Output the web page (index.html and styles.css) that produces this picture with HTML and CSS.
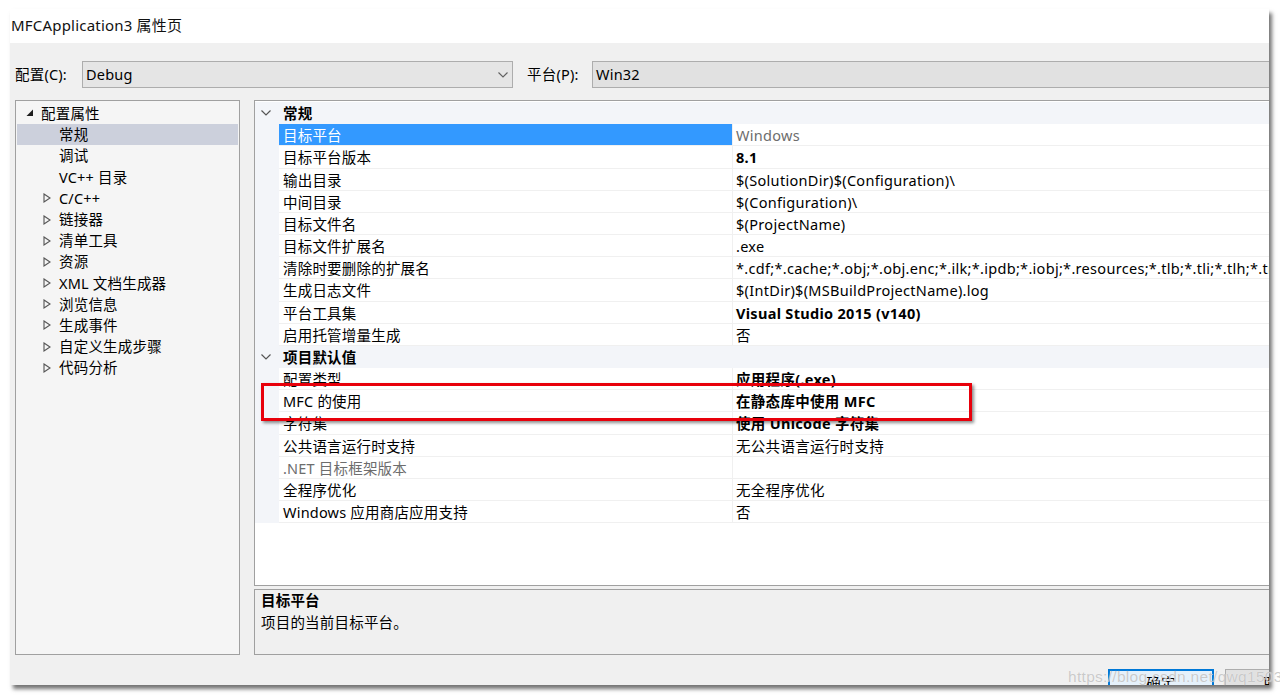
FILE: index.html
```html
<!DOCTYPE html>
<html lang="zh">
<head>
<meta charset="utf-8">
<title>MFCApplication3 属性页</title>
<link rel="stylesheet" href="styles.css">
</head>
<body>
<div class="window">
  <div class="titlebar">MFCApplication3 属性页</div>
  <div class="configbar">
    <span class="label">配置(C):</span>
    <div class="combo combo-config">
      <span>Debug</span>
      <svg class="arrow" width="10" height="6" viewBox="0 0 10 6"><path d="M0.5 0.5 L5 5 L9.5 0.5" fill="none" stroke="#606060" stroke-width="1.1"/></svg>
    </div>
    <span class="label label-plat">平台(P):</span>
    <div class="combo combo-plat"><span>Win32</span></div>
  </div>
  <div class="main">
    <div class="tree">
      <div class="titem root"><svg class="exp" width="8" height="8" viewBox="0 0 8 8"><polygon points="7,0.5 7,7 0.5,7" fill="#1e1e1e"/></svg><span>配置属性</span></div>
      <div class="titem leaf sel"><span>常规</span></div>
      <div class="titem leaf"><span>调试</span></div>
      <div class="titem leaf"><span>VC++ 目录</span></div>
      <div class="titem child"><svg class="col" width="8" height="10" viewBox="0 0 8 10"><polygon points="1,1 7,5 1,9" fill="none" stroke="#555" stroke-width="1.1"/></svg><span>C/C++</span></div>
      <div class="titem child"><svg class="col" width="8" height="10" viewBox="0 0 8 10"><polygon points="1,1 7,5 1,9" fill="none" stroke="#555" stroke-width="1.1"/></svg><span>链接器</span></div>
      <div class="titem child"><svg class="col" width="8" height="10" viewBox="0 0 8 10"><polygon points="1,1 7,5 1,9" fill="none" stroke="#555" stroke-width="1.1"/></svg><span>清单工具</span></div>
      <div class="titem child"><svg class="col" width="8" height="10" viewBox="0 0 8 10"><polygon points="1,1 7,5 1,9" fill="none" stroke="#555" stroke-width="1.1"/></svg><span>资源</span></div>
      <div class="titem child"><svg class="col" width="8" height="10" viewBox="0 0 8 10"><polygon points="1,1 7,5 1,9" fill="none" stroke="#555" stroke-width="1.1"/></svg><span>XML 文档生成器</span></div>
      <div class="titem child"><svg class="col" width="8" height="10" viewBox="0 0 8 10"><polygon points="1,1 7,5 1,9" fill="none" stroke="#555" stroke-width="1.1"/></svg><span>浏览信息</span></div>
      <div class="titem child"><svg class="col" width="8" height="10" viewBox="0 0 8 10"><polygon points="1,1 7,5 1,9" fill="none" stroke="#555" stroke-width="1.1"/></svg><span>生成事件</span></div>
      <div class="titem child"><svg class="col" width="8" height="10" viewBox="0 0 8 10"><polygon points="1,1 7,5 1,9" fill="none" stroke="#555" stroke-width="1.1"/></svg><span>自定义生成步骤</span></div>
      <div class="titem child"><svg class="col" width="8" height="10" viewBox="0 0 8 10"><polygon points="1,1 7,5 1,9" fill="none" stroke="#555" stroke-width="1.1"/></svg><span>代码分析</span></div>
    </div>
    <div class="right">
      <div class="grid">
        <div class="cat"><div class="gut"><svg width="10" height="6" viewBox="0 0 10 6"><path d="M0.5 0.5 L5 5 L9.5 0.5" fill="none" stroke="#555" stroke-width="1.2"/></svg></div><div class="catname">常规</div></div>
        <div class="row"><div class="gut"></div><div class="name selname">目标平台</div><div class="val gray">Windows</div></div>
        <div class="row"><div class="gut"></div><div class="name">目标平台版本</div><div class="val b">8.1</div></div>
        <div class="row"><div class="gut"></div><div class="name">输出目录</div><div class="val">$(SolutionDir)$(Configuration)\</div></div>
        <div class="row"><div class="gut"></div><div class="name">中间目录</div><div class="val">$(Configuration)\</div></div>
        <div class="row"><div class="gut"></div><div class="name">目标文件名</div><div class="val">$(ProjectName)</div></div>
        <div class="row"><div class="gut"></div><div class="name">目标文件扩展名</div><div class="val">.exe</div></div>
        <div class="row"><div class="gut"></div><div class="name">清除时要删除的扩展名</div><div class="val">*.cdf;*.cache;*.obj;*.obj.enc;*.ilk;*.ipdb;*.iobj;*.resources;*.tlb;*.tli;*.tlh;*.tmp;*.rsp;*.pgc;*.pgd;*.meta;*.tlog;*.manifest;*.res;*.pch</div></div>
        <div class="row"><div class="gut"></div><div class="name">生成日志文件</div><div class="val">$(IntDir)$(MSBuildProjectName).log</div></div>
        <div class="row"><div class="gut"></div><div class="name">平台工具集</div><div class="val b">Visual Studio 2015 (v140)</div></div>
        <div class="row"><div class="gut"></div><div class="name">启用托管增量生成</div><div class="val">否</div></div>
        <div class="cat"><div class="gut"><svg width="10" height="6" viewBox="0 0 10 6"><path d="M0.5 0.5 L5 5 L9.5 0.5" fill="none" stroke="#555" stroke-width="1.2"/></svg></div><div class="catname">项目默认值</div></div>
        <div class="row"><div class="gut"></div><div class="name">配置类型</div><div class="val b">应用程序(.exe)</div></div>
        <div class="row"><div class="gut"></div><div class="name">MFC 的使用</div><div class="val b">在静态库中使用 MFC</div></div>
        <div class="row"><div class="gut"></div><div class="name">字符集</div><div class="val b">使用 Unicode 字符集</div></div>
        <div class="row"><div class="gut"></div><div class="name">公共语言运行时支持</div><div class="val">无公共语言运行时支持</div></div>
        <div class="row"><div class="gut"></div><div class="name gray">.NET 目标框架版本</div><div class="val"></div></div>
        <div class="row"><div class="gut"></div><div class="name">全程序优化</div><div class="val">无全程序优化</div></div>
        <div class="row"><div class="gut"></div><div class="name">Windows 应用商店应用支持</div><div class="val">否</div></div>
      </div>
      <div class="desc">
        <div class="desc-title">目标平台</div>
        <div class="desc-text">项目的当前目标平台。</div>
      </div>
    </div>
  </div>
  <div class="buttons">
    <div class="btn btn-ok">确定</div>
    <div class="btn">取消</div>
  </div>
</div>
<div class="redbox"></div>
<div class="watermark">https://blog.csdn.net/qwq1503</div>
</body>
</html>
```

FILE: styles.css
```css
html, body {
  margin: 0;
  padding: 0;
  background: #ffffff;
  overflow: hidden;
  width: 1280px;
  height: 696px;
}
body {
  font-family: "Noto Sans", "Noto Sans CJK SC", sans-serif;
  font-size: 14.5px;
  letter-spacing: 0.2px;
  color: #000;
  position: relative;
}
.window {
  margin: 9px 0 0 10px;
  width: 1259px;
  height: 676px;
  background: #f0f0f0;
  box-shadow: 3px 4px 4px rgba(0, 0, 0, 0.55);
  overflow: hidden;
  display: flex;
  flex-direction: column;
}
.titlebar {
  height: 34px;
  line-height: 33px;
  background: #ffffff;
  padding-left: 1px;
  font-size: 15px;
  color: #111;
  flex: none;
}
.configbar {
  display: flex;
  align-items: center;
  padding: 18px 0 0 5px;
  height: 27px;
  flex: none;
}
.label {
  width: 67px;
  line-height: 27px;
}
.label-plat {
  width: 65px;
  margin-left: 14px;
}
.combo {
  box-sizing: border-box;
  height: 27px;
  border: 1px solid #adadad;
  background: #e5e5e5;
  display: flex;
  align-items: center;
  padding-left: 3px;
  line-height: 25px;
}
.combo-config {
  width: 431px;
  justify-content: space-between;
  padding-right: 4px;
}
.combo-plat {
  flex: 1;
  margin-right: -10px;
  background: #e1e1e1;
}
.main {
  display: flex;
  margin-top: 12px;
  height: 555px;
  flex: none;
}
.tree {
  box-sizing: border-box;
  margin-left: 5px;
  width: 225px;
  height: 555px;
  border: 1px solid #a0a0a0;
  background: #f5f5f5;
  padding-top: 2px;
  flex: none;
}
.titem {
  height: 21.2px;
  line-height: 21.2px;
  display: flex;
  align-items: center;
  white-space: nowrap;
}
.titem.root {
  padding-left: 10px;
}
.titem.root .exp {
  margin-right: 7px;
  margin-top: -2px;
}
.titem.leaf {
  padding-left: 43px;
}
.titem.child {
  padding-left: 27px;
}
.titem.child .col {
  margin-right: 8px;
}
.titem.sel {
  background: #ccd0dc;
  margin: 0 1px;
  padding-left: 42px;
}
.right {
  margin-left: 14px;
  flex: 1;
  margin-right: -30px;
  display: flex;
  flex-direction: column;
}
.grid {
  box-sizing: border-box;
  height: 486px;
  border: 1px solid #a0a0a0;
  background: #ffffff;
  padding-top: 1px;
  flex: none;
}
.cat, .row {
  display: flex;
  height: 22.18px;
  line-height: 22px;
  white-space: nowrap;
}
.gut {
  width: 24px;
  flex: none;
  background: #f3f5f9;
  display: flex;
  align-items: center;
  justify-content: center;
}
.cat {
  background: #f3f5f9;
}
.cat .gut svg {
  margin-left: -2px;
}
.catname {
  font-weight: bold;
  padding-left: 4px;
}
.row .name {
  box-sizing: border-box;
  width: 454px;
  flex: none;
  padding-left: 4px;
  border-bottom: 1px solid #f0f0f0;
  border-right: 1px solid #f0f0f0;
  overflow: hidden;
}
.row .val {
  flex: 1;
  padding-left: 3px;
  letter-spacing: 0.3px;
  border-bottom: 1px solid #f0f0f0;
  overflow: hidden;
}
.selname {
  background: #3399ff;
  color: #ffffff;
}
.gray {
  color: #6d6d6d;
}
.b {
  font-weight: bold;
}
.desc {
  box-sizing: border-box;
  margin-top: 3px;
  height: 66px;
  border: 1px solid #a0a0a0;
  background: #f0f0f0;
  padding: 0 0 0 6px;
}
.desc-title {
  font-weight: bold;
  line-height: 21px;
}
.desc-text {
  line-height: 22px;
}
.buttons {
  display: flex;
  justify-content: flex-end;
  gap: 11px;
  padding-top: 14px;
  margin-right: -62px;
}
.btn {
  box-sizing: border-box;
  width: 106px;
  height: 28px;
  border: 1px solid #adadad;
  background: #e1e1e1;
  text-align: center;
  line-height: 26px;
  flex: none;
}
.btn-ok {
  border: 2px solid #0078d7;
  background: #e5f1fb;
  line-height: 24px;
}
.redbox {
  position: absolute;
  left: 261px;
  top: 383px;
  width: 705px;
  height: 32px;
  border: 3px solid #e8000b;
  box-shadow: 2px 2px 3px rgba(0, 0, 0, 0.45);
}
.watermark {
  position: absolute;
  left: 1068px;
  top: 668px;
  font-family: "Liberation Sans", sans-serif;
  font-size: 15.5px;
  letter-spacing: 0.3px;
  color: rgba(185, 185, 185, 0.75);
  text-shadow: 0 0 1px rgba(255, 255, 255, 0.8);
  white-space: nowrap;
}
```
